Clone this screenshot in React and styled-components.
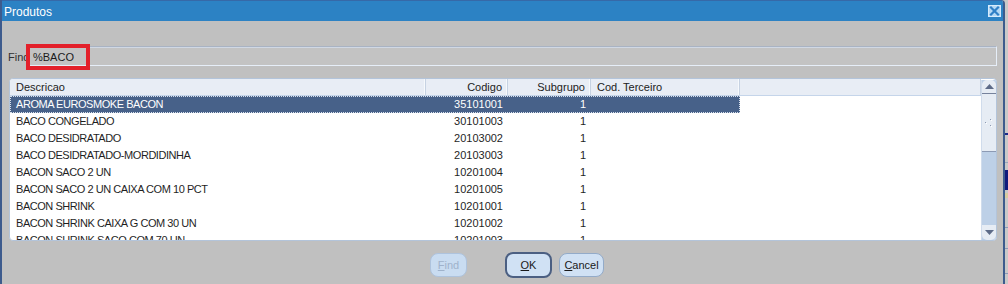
import React from "react";
import styled, { createGlobalStyle } from "styled-components";

const GlobalStyle = createGlobalStyle`
  html, body {
    margin: 0;
    padding: 0;
    background: #c0c0c0;
  }
  body {
    font-family: "Liberation Sans", Arial, sans-serif;
    font-size: 11px;
    color: #1c1c1c;
  }
`;

const columns = [
  { key: "descricao", title: "Descricao", width: 416, align: "left" },
  { key: "codigo", title: "Codigo", width: 82, align: "right" },
  { key: "subgrupo", title: "Subgrupo", width: 83, align: "right" },
  { key: "terceiro", title: "Cod. Terceiro", width: 149, align: "left" },
];

const rows = [
  ["AROMA EUROSMOKE BACON", "35101001", "1", ""],
  ["BACO CONGELADO", "30101003", "1", ""],
  ["BACO DESIDRATADO", "20103002", "1", ""],
  ["BACO DESIDRATADO-MORDIDINHA", "20103003", "1", ""],
  ["BACON SACO 2 UN", "10201004", "1", ""],
  ["BACON SACO 2 UN CAIXA COM 10 PCT", "10201005", "1", ""],
  ["BACON SHRINK", "10201001", "1", ""],
  ["BACON SHRINK CAIXA G COM 30 UN", "10201002", "1", ""],
  ["BACON SHRINK SACO COM 70 UN", "10201003", "1", ""],
];

export default function App() {
  const selected = 0;

  return (
    <Screen>
      <GlobalStyle />
      <Window>
        <TitleBar>
          <Title>Produtos</Title>
          <CloseButton>
            <svg width="11" height="10" viewBox="0 0 11 10">
              <path
                d="M2 1.5 L9 8.5 M9 1.5 L2 8.5"
                stroke="#2f7fc6"
                strokeWidth="2.2"
                strokeLinecap="square"
              />
            </svg>
          </CloseButton>
        </TitleBar>

        <Body>
          <FindRow>
            <FindLabel>Find</FindLabel>
            <FindField>%BACO</FindField>
            <Highlight />
          </FindRow>

          <TableFrame>
            <Grid>
              <HeaderRow>
                {columns.map((c) => (
                  <HeaderCell key={c.key} $width={c.width} $align={c.align}>
                    {c.title}
                  </HeaderCell>
                ))}
                <HeaderFiller />
              </HeaderRow>
              <RowList>
                {rows.map((r, i) => (
                  <Row key={r[1]} $selected={i === selected}>
                    {columns.map((c, j) => (
                      <Cell
                        key={c.key}
                        $width={c.width}
                        $align={c.align}
                        $caps={j === 0}
                      >
                        {r[j]}
                      </Cell>
                    ))}
                  </Row>
                ))}
              </RowList>
            </Grid>
            <ScrollBar>
              <ScrollUp>
                <svg width="9" height="5" viewBox="0 0 9 5">
                  <path d="M0 5 L4.5 0 L9 5 Z" fill="#5d6b88" />
                </svg>
              </ScrollUp>
              <ScrollThumb>
                <svg width="8" height="8" viewBox="0 0 8 8">
                  <rect x="5" y="0" width="1" height="1" fill="#8d99b0" />
                  <rect x="0" y="3" width="1" height="1" fill="#8d99b0" />
                  <rect x="5" y="6" width="1" height="1" fill="#8d99b0" />
                  <rect x="6" y="1" width="1" height="1" fill="#fff" />
                  <rect x="1" y="4" width="1" height="1" fill="#fff" />
                  <rect x="6" y="7" width="1" height="1" fill="#fff" />
                </svg>
              </ScrollThumb>
              <ScrollTrack />
              <ScrollDown>
                <svg width="9" height="5" viewBox="0 0 9 5">
                  <path d="M0 0 L9 0 L4.5 5 Z" fill="#5d6b88" />
                </svg>
              </ScrollDown>
            </ScrollBar>
          </TableFrame>

          <ButtonBar>
            <DialogButton $width={37} disabled>
              <u>F</u>ind
            </DialogButton>
            <DialogButton $width={47} $default>
              <u>O</u>K
            </DialogButton>
            <DialogButton $width={45}>
              <u>C</u>ancel
            </DialogButton>
          </ButtonBar>
        </Body>
      </Window>
      <Backdrop />
    </Screen>
  );
}

const Screen = styled.div`
  width: 1008px;
  height: 284px;
  display: flex;
  overflow: hidden;
  background: #c0c0c0;
`;

const Window = styled.div`
  width: 1005px;
  height: 300px;
  box-sizing: border-box;
  display: flex;
  flex-direction: column;
  background: #c0c0c0;
  border-left: 2px solid #3d5b8d;
  border-right: 2px solid #3d5b8d;
  border-top-right-radius: 4px;
  overflow: hidden;
`;

const TitleBar = styled.div`
  height: 21px;
  flex: none;
  box-sizing: border-box;
  display: flex;
  align-items: center;
  justify-content: space-between;
  padding: 0 2px 0 2px;
  background: #2c82c4;
  border-top: 1px solid #3669a8;
`;

const Title = styled.span`
  color: #ffffff;
  font-size: 12px;
  padding-top: 1px;
`;

const CloseButton = styled.div`
  width: 13px;
  height: 12px;
  box-sizing: border-box;
  display: flex;
  align-items: center;
  justify-content: center;
  background: #b4d8f5;
  border: 1px solid #d6ebfc;
`;

const Body = styled.div`
  display: flex;
  flex-direction: column;
  padding: 25px 6px 0 6px;
`;

const FindRow = styled.div`
  position: relative;
  display: flex;
  align-items: center;
  height: 20px;
`;

const FindLabel = styled.span`
  width: 20px;
  white-space: nowrap;
  color: #303030;
  padding-top: 1px;
`;

const FindField = styled.div`
  flex: 1;
  height: 20px;
  box-sizing: border-box;
  display: flex;
  align-items: center;
  padding: 1px 0 0 4px;
  background: #c3c3c3;
  border: 1px solid #a9b3c3;
  border-right-color: #e6eef8;
  border-bottom-color: #e6eef8;
  box-shadow: inset 1px 1px 0 #d0d8e4;
  color: #1a1a1a;
`;

const Highlight = styled.div`
  position: absolute;
  left: 18px;
  top: -2px;
  width: 64px;
  height: 26px;
  box-sizing: border-box;
  border: 4px solid #e3202a;
  pointer-events: none;
`;

const TableFrame = styled.div`
  margin: 12px 0 0 1px;
  height: 163px;
  box-sizing: border-box;
  display: flex;
  background: #ffffff;
  border: 1px solid #b3c4da;
  border-radius: 4px;
  overflow: hidden;
`;

const Grid = styled.div`
  flex: 1;
  display: flex;
  flex-direction: column;
  overflow: hidden;
`;

const HeaderRow = styled.div`
  display: flex;
  height: 17px;
  flex: none;
  box-sizing: border-box;
  background: #e8edf5;
  border-bottom: 1px solid #c5d5ea;
`;

const HeaderCell = styled.div`
  width: ${(p) => p.$width}px;
  flex: none;
  box-sizing: border-box;
  padding: 1px ${(p) => (p.$align === "right" ? 5 : 0)}px 0
    ${(p) => (p.$align === "left" ? 6 : 0)}px;
  text-align: ${(p) => p.$align};
  line-height: 15px;
  color: #222;
  border-right: 1px solid #c6d2e2;
  box-shadow: inset -1px 0 0 #f6f9fc;
  white-space: nowrap;
`;

const HeaderFiller = styled.div`
  flex: 1;
  border-right: 1px solid #c6d2e2;
`;

const RowList = styled.div`
  flex: 1;
  overflow: hidden;
`;

const Row = styled.div`
  display: flex;
  width: 730px;
  height: 17px;
  box-sizing: border-box;
  background: ${(p) => (p.$selected ? "#476189" : "transparent")};
  color: ${(p) => (p.$selected ? "#ffffff" : "#1f1f1f")};
  border: 1px dotted ${(p) => (p.$selected ? "#d8e0ec" : "transparent")};
`;

const Cell = styled.div`
  width: ${(p) => p.$width}px;
  flex: none;
  box-sizing: border-box;
  padding: 0 ${(p) => (p.$align === "right" ? 5 : 0)}px 0
    ${(p) => (p.$align === "left" ? 5 : 0)}px;
  text-align: ${(p) => p.$align};
  line-height: 15px;
  letter-spacing: ${(p) => (p.$caps ? "-0.45px" : "0")};
  white-space: nowrap;
  overflow: hidden;
  &:first-child {
    width: ${(p) => p.$width - 1}px;
  }
`;

const ScrollBar = styled.div`
  width: 14px;
  flex: none;
  display: flex;
  flex-direction: column;
  margin: 1px 0 0 0;
  background: #bdd0e7;
  border-left: 1px solid #d0dcec;
`;

const ScrollButton = styled.div`
  height: 14px;
  flex: none;
  display: flex;
  align-items: center;
  justify-content: center;
  background: #e6ecf4;
`;

const ScrollUp = styled(ScrollButton)`
  border-radius: 5px 5px 0 0;
  border-bottom: 1px solid #76829c;
  box-sizing: border-box;
`;

const ScrollDown = styled(ScrollButton)`
  height: 15px;
  border-radius: 0 0 5px 5px;
`;

const ScrollThumb = styled.div`
  height: 58px;
  flex: none;
  box-sizing: border-box;
  display: flex;
  align-items: center;
  justify-content: center;
  background: #e6ecf4;
  border-bottom: 1px solid #8c9ab4;
`;

const ScrollTrack = styled.div`
  flex: 1;
`;

const ButtonBar = styled.div`
  display: flex;
  align-items: center;
  height: 26px;
  margin-top: 11px;
  padding-left: 422px;
`;

const DialogButton = styled.button`
  width: ${(p) => p.$width}px;
  height: ${(p) => (p.$default ? 26 : 24)}px;
  box-sizing: border-box;
  padding: 0;
  margin-right: ${(p) => (p.$default ? 7 : 38)}px;
  font-family: "Liberation Sans", Arial, sans-serif;
  font-size: 11px;
  color: #1a1a1a;
  background: #d0e1f4;
  border: ${(p) => (p.$default ? "2px solid #4b5f82" : "1px solid #93abc9")};
  border-radius: 8px;
  u {
    text-decoration-thickness: 1px;
    text-underline-offset: 1px;
  }
  &:disabled {
    color: #9fb2cb;
    background: #c9dcf1;
    border-color: #aec3dd;
  }
`;

const Backdrop = styled.div`
  flex: 1;
  background: linear-gradient(
    to bottom,
    #c9c9c9 0px,
    #c9c9c9 133px,
    #1b2a8a 133px,
    #1b2a8a 135px,
    #c9c9c9 135px,
    #c9c9c9 162px,
    #9aa6bc 162px,
    #9aa6bc 163px,
    #c9c9c9 163px,
    #c9c9c9 170px,
    #101a7c 170px,
    #101a7c 190px,
    #c9c9c9 190px,
    #c9c9c9 193px,
    #d8cca0 193px,
    #d8cca0 198px,
    #c9c9c9 198px,
    #c9c9c9 227px,
    #8c9ab8 227px,
    #8c9ab8 228px,
    #c9c9c9 228px,
    #c9c9c9 248px,
    #8c9ab8 248px,
    #8c9ab8 249px,
    #c9c9c9 249px,
    #c9c9c9 273px,
    #8c9ab8 273px,
    #8c9ab8 274px,
    #c9c9c9 274px
  );
`;
